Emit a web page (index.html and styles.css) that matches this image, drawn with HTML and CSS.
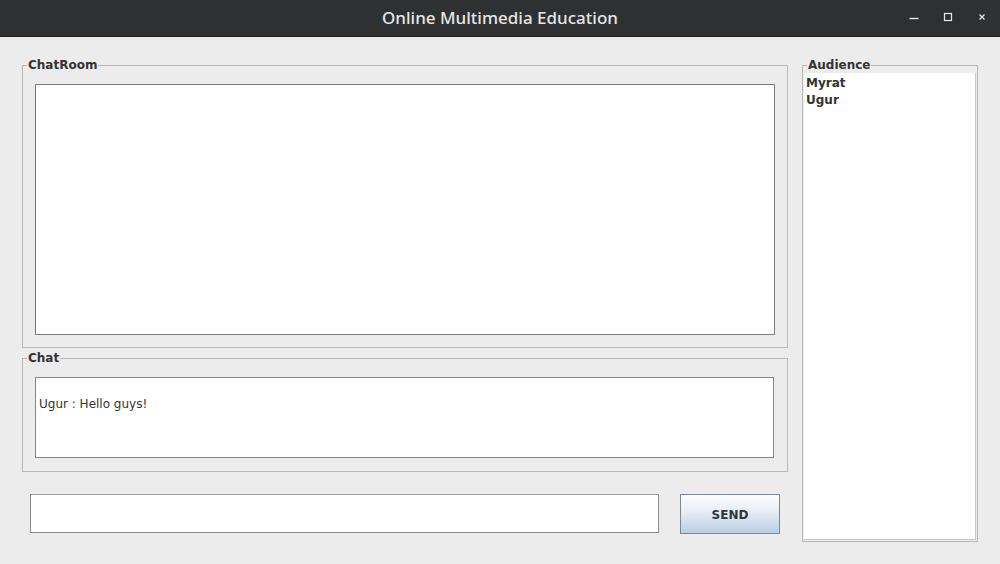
FILE: index.html
```html
<!DOCTYPE html>
<html>
<head>
<meta charset="utf-8">
<link rel="stylesheet" href="styles.css">
</head>
<body>
<div class="window">
  <header class="titlebar">
    <div class="title">Online Multimedia Education</div>
    <div class="controls">
      <svg class="ctl" width="14" height="14" viewBox="0 0 14 14"><path d="M2.5 8.5h9" stroke="#e8e8e8" stroke-width="1.4" fill="none"/></svg>
      <svg class="ctl" width="14" height="14" viewBox="0 0 14 14"><rect x="3.5" y="3.5" width="7" height="7" stroke="#e8e8e8" stroke-width="1.2" fill="none"/></svg>
      <svg class="ctl" width="14" height="14" viewBox="0 0 14 14"><path d="M4.5 4.5l5 5M9.5 4.5l-5 5" stroke="#e8e8e8" stroke-width="1.2" fill="none"/></svg>
    </div>
  </header>
  <main class="content">
    <div class="left">
      <fieldset class="group chatroom">
        <legend class="legend">ChatRoom</legend>
        <div class="area room"></div>
      </fieldset>
      <fieldset class="group chat">
        <legend class="legend">Chat</legend>
        <div class="area msgs">Ugur : Hello guys!</div>
      </fieldset>
      <div class="inputrow">
        <div class="field"></div>
        <button class="send">SEND</button>
      </div>
    </div>
    <fieldset class="group audience">
      <legend class="legend">Audience</legend>
      <ul class="list">
        <li>Myrat</li>
        <li>Ugur</li>
      </ul>
    </fieldset>
  </main>
</div>
</body>
</html>
```

FILE: styles.css
```css
* { box-sizing: border-box; }
html, body { margin: 0; padding: 0; }
body {
  width: 1000px;
  height: 564px;
  overflow: hidden;
  background: #ececec;
  font-family: "DejaVu Sans", "Liberation Sans", sans-serif;
  color: #333;
}
.window { height: 564px; display: flex; flex-direction: column; }
.titlebar {
  height: 37px;
  flex: none;
  background: #2e3032;
  border-bottom: 1px solid #1e1f20;
  display: grid;
  grid-template-columns: 1fr auto 1fr;
  align-items: center;
}
.title {
  grid-column: 2;
  color: #e6e6e6;
  font-family: "Noto Sans", "Open Sans", sans-serif;
  font-size: 17px;
  font-weight: 500;
  letter-spacing: 0;
  padding-bottom: 1px;
}
.controls {
  grid-column: 3;
  justify-self: end;
  display: flex;
  gap: 20px;
  padding-right: 11px;
  padding-bottom: 2px;
}
.ctl { display: block; }
.content {
  flex: 1;
  display: flex;
  align-items: flex-start;
  gap: 14px;
  padding: 21px 22px 0 22px;
}
.left {
  width: 766px;
  display: flex;
  flex-direction: column;
}
.group {
  margin: 0;
  border: 1px solid #b9b9b9;
  min-width: 0;
}
.legend {
  font-weight: bold;
  font-size: 12px;
  line-height: 14px;
  padding: 0 1px;
  color: #333;
}
.chatroom { padding: 12px 12px 12px 12px; }
.chatroom .legend { margin-left: -8px; }
.chat { margin-top: 3px; padding: 12px 13px 13px 12px; }
.chat .legend { margin-left: -8px; }
.area {
  background: #fff;
  border: 1px solid #7b7b7b;
}
.room { height: 251px; }
.msgs {
  height: 81px;
  border-color: #858585;
  font-size: 12px;
  line-height: 17px;
  padding: 18px 3px 0;
  color: #333;
}
.inputrow {
  margin-top: 22px;
  display: flex;
  align-items: flex-start;
  gap: 21px;
  padding-left: 8px;
}
.field {
  width: 629px;
  height: 39px;
  background: #fff;
  border: 1px solid #8a8a8f;
  border-top-color: #9a9aa0;
}
.send {
  width: 100px;
  height: 40px;
  margin: 0;
  border: 1px solid #7c8894;
  background: linear-gradient(#fcfdfe 0%, #e6edf5 45%, #b9cde3 100%);
  font-family: "DejaVu Sans", sans-serif;
  font-weight: bold;
  font-size: 12px;
  color: #333;
  padding: 1px 0 0;
}
.audience {
  width: 176px;
  height: 484px;
  padding: 1px;
}
.audience .legend { margin-left: 3px; }
.list {
  list-style: none;
  margin: 0;
  padding: 2px 0 0 2px;
  background: #fff;
  height: 467px;
  border-right: 1px solid #c8c8c8;
  border-bottom: 1px solid #c8c8c8;
  font-size: 12px;
  font-weight: bold;
  line-height: 17px;
}
```
